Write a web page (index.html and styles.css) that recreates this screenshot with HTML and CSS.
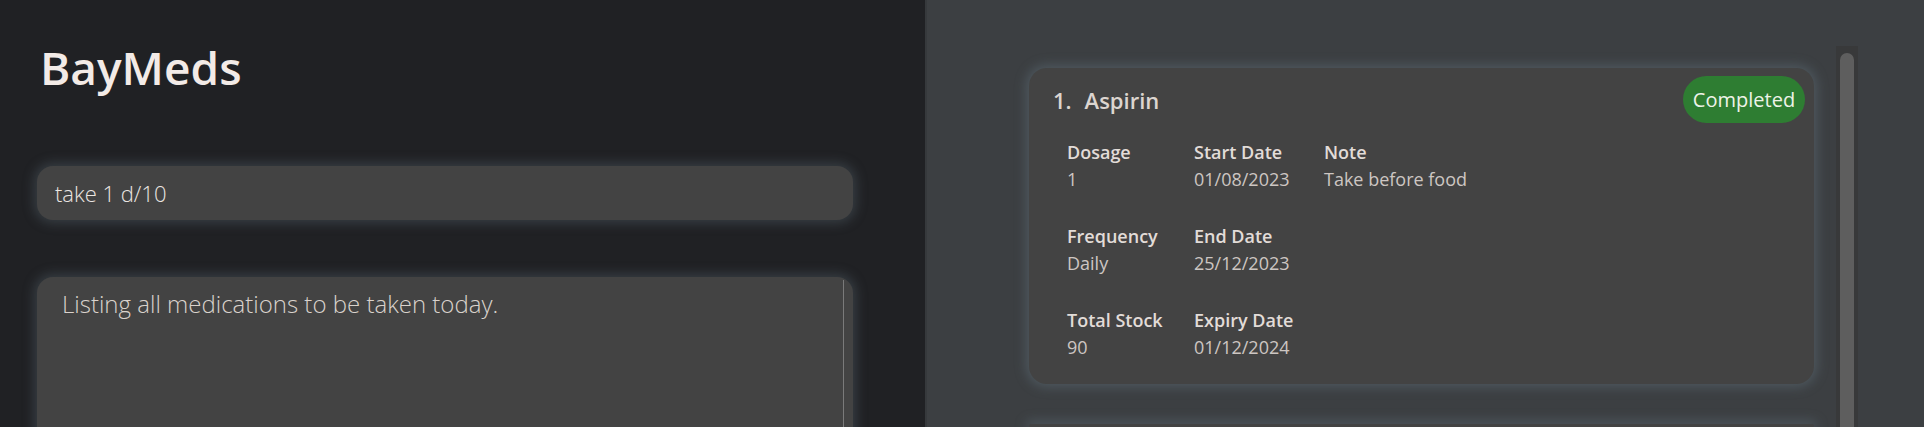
FILE: index.html
```html
<!DOCTYPE html>
<html lang="en">
<head>
<meta charset="utf-8">
<title>BayMeds</title>
<link rel="stylesheet" href="styles.css">
</head>
<body>
<div class="app">
  <section class="left">
    <h1 class="brand">BayMeds</h1>
    <div class="command">take 1 d/10</div>
    <div class="result">
      <div class="result-text">Listing all medications to be taken today.</div>
      <div class="result-track"></div>
    </div>
  </section>
  <section class="right">
    <div class="list">
      <article class="card">
        <header class="card-head">
          <h2 class="card-title"><span class="idx">1.</span><span class="name">Aspirin</span></h2>
          <span class="badge">Completed</span>
        </header>
        <div class="fields">
          <div class="field"><div class="label">Dosage</div><div class="value">1</div></div>
          <div class="field"><div class="label">Start Date</div><div class="value">01/08/2023</div></div>
          <div class="field"><div class="label">Note</div><div class="value">Take before food</div></div>
          <div class="field"><div class="label">Frequency</div><div class="value">Daily</div></div>
          <div class="field"><div class="label">End Date</div><div class="value">25/12/2023</div></div>
          <div class="field empty"></div>
          <div class="field"><div class="label">Total Stock</div><div class="value">90</div></div>
          <div class="field"><div class="label">Expiry Date</div><div class="value">01/12/2024</div></div>
        </div>
      </article>
      <article class="card card-next"></article>
    </div>
    <div class="scrollbar"><div class="thumb"></div></div>
  </section>
</div>
</body>
</html>
```

FILE: styles.css
```css
html, body {
  margin: 0;
  padding: 0;
}
body {
  width: 1924px;
  height: 427px;
  overflow: hidden;
  font-family: "Open Sans", "Noto Sans", sans-serif;
  background: #3c3f42;
}
.app {
  display: flex;
  height: 427px;
  overflow: hidden;
}
.left {
  width: 927px;
  flex: none;
  background: #202124;
  padding: 39px 0 0 37px;
  box-sizing: border-box;
  border-right: 2px solid #36393c;
}
.brand {
  margin: 0 0 0 3px;
  font-size: 46px;
  line-height: 56px;
  font-weight: 600;
  color: #f3ebe7;
}
.command {
  margin-top: 71px;
  width: 816px;
  height: 54px;
  box-sizing: border-box;
  padding-left: 18px;
  background: #434343;
  border-radius: 16px;
  box-shadow: 0 0 12px 3px rgba(100, 118, 128, 0.35);
  font-size: 22px;
  font-weight: 300;
  line-height: 54px;
  color: #ebe6e2;
}
.result {
  margin-top: 57px;
  width: 816px;
  height: 200px;
  display: flex;
  background: #434343;
  border-radius: 16px 16px 0 0;
  box-shadow: 0 0 12px 3px rgba(100, 118, 128, 0.35);
}
.result-text {
  flex: 1;
  padding: 12px 0 0 25px;
  font-size: 24px;
  font-weight: 300;
  line-height: 30px;
  color: #d9d2cc;
}
.result-track {
  width: 1px;
  margin: 3px 9px 0 0;
  background: #7a7a7a;
}
.right {
  flex: 1;
  display: flex;
  background: #3c3f42;
}
.list {
  flex: none;
  width: 785px;
  padding: 68px 22px 0 102px;
  display: flex;
  flex-direction: column;
  gap: 40px;
}
.card {
  background: #434343;
  border-radius: 18px;
  box-shadow: 0 0 12px 3px rgba(105, 125, 135, 0.42);
  padding: 8px 9px 25px 24px;
}
.card-next {
  height: 200px;
  padding: 0;
}
.card-head {
  display: flex;
  align-items: center;
  justify-content: space-between;
  height: 47px;
}
.card-title {
  margin: 0;
  font-size: 22px;
  line-height: 30px;
  font-weight: 600;
  color: #dcd5d0;
}
.idx {
  margin-right: 13px;
}
.badge {
  height: 47px;
  width: 122px;
  border-radius: 24px;
  background: #2e7d32;
  color: #eef3e8;
  font-size: 20px;
  line-height: 47px;
  text-align: center;
}
.fields {
  margin: 17px 0 0 14px;
  display: grid;
  grid-template-columns: 127px 130px auto;
  row-gap: 33px;
}
.label {
  font-size: 18px;
  line-height: 24px;
  font-weight: 600;
  color: #e2dcd8;
}
.value {
  margin-top: 3px;
  font-size: 18px;
  line-height: 24px;
  color: #cdc6c2;
}
.scrollbar {
  flex: none;
  width: 22px;
  margin-top: 46px;
  background: #38393a;
  display: flex;
  justify-content: center;
  padding-top: 7px;
  box-sizing: border-box;
}
.thumb {
  width: 14px;
  height: 420px;
  background: #5e5e5e;
  border-radius: 7px;
}
```
